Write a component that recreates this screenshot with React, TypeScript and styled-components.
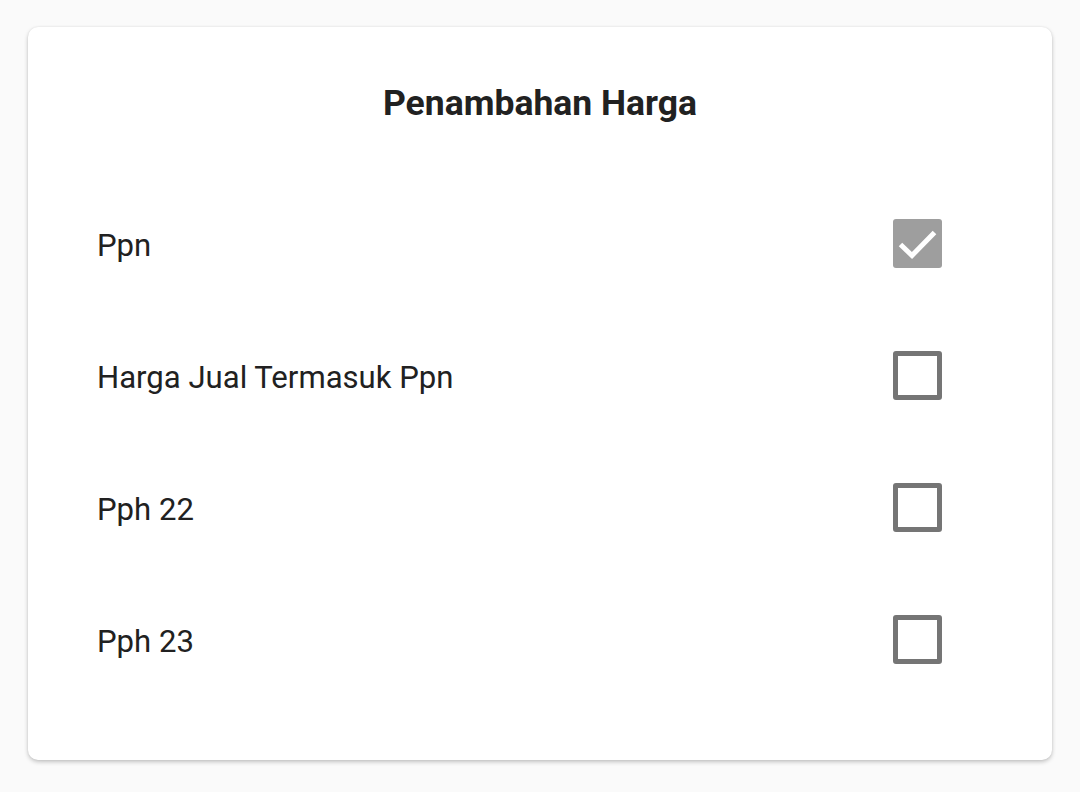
import React, { useState } from "react";
import styled, { createGlobalStyle } from "styled-components";

const Global = createGlobalStyle`
  html, body { margin: 0; padding: 0; background: #fafafa; }
  body { font-family: Roboto, "Noto Sans", sans-serif; color: #212121; }
`;

const Page = styled.div`
  width: 1080px;
  height: 792px;
  box-sizing: border-box;
  padding: 27px 28px 0 28px;
  background: #fafafa;
`;

const Card = styled.div`
  background: #ffffff;
  border-radius: 10px;
  box-shadow: 0 2px 4px rgba(0, 0, 0, 0.22), 0 0 2px rgba(0, 0, 0, 0.08);
  padding: 56px 110px 53px 69px;
  display: flex;
  flex-direction: column;
`;

const Title = styled.h1`
  margin: 0 0 56px 0;
  text-align: center;
  font-size: 35.5px;
  line-height: 40px;
  font-weight: 700;
  color: #212121;
  padding-left: 41px;
`;

const Row = styled.label`
  height: 132px;
  display: flex;
  align-items: center;
  justify-content: space-between;
  cursor: pointer;
`;

const Label = styled.span`
  font-size: 31.1px;
  font-weight: 400;
  color: #212121;
`;

const Box = styled.span<{ $checked: boolean }>`
  width: 49px;
  height: 49px;
  margin-bottom: 4px;
  box-sizing: border-box;
  border-radius: 3px;
  border: ${(p) => (p.$checked ? "none" : "5px solid #757575")};
  background: ${(p) => (p.$checked ? "#9e9e9e" : "#ffffff")};
  display: flex;
  align-items: center;
  justify-content: center;
`;

const items = ["Ppn", "Harga Jual Termasuk Ppn", "Pph 22", "Pph 23"];

export default function App() {
  const [checked, setChecked] = useState<boolean[]>([true, false, false, false]);
  return (
    <>
      <Global />
      <Page>
        <Card>
          <Title>Penambahan Harga</Title>
          {items.map((t, i) => (
            <Row
              key={t}
              onClick={() =>
                setChecked((c) => c.map((v, j) => (j === i ? !v : v)))
              }
            >
              <Label>{t}</Label>
              <Box $checked={checked[i]}>
                {checked[i] && (
                  <svg width="49" height="49" viewBox="0 0 49 49">
                    <path
                      d="M7.5 25.5 L19 36.5 L41.5 13.5"
                      fill="none"
                      stroke="#ffffff"
                      strokeWidth="5"
                    />
                  </svg>
                )}
              </Box>
            </Row>
          ))}
        </Card>
      </Page>
    </>
  );
}
